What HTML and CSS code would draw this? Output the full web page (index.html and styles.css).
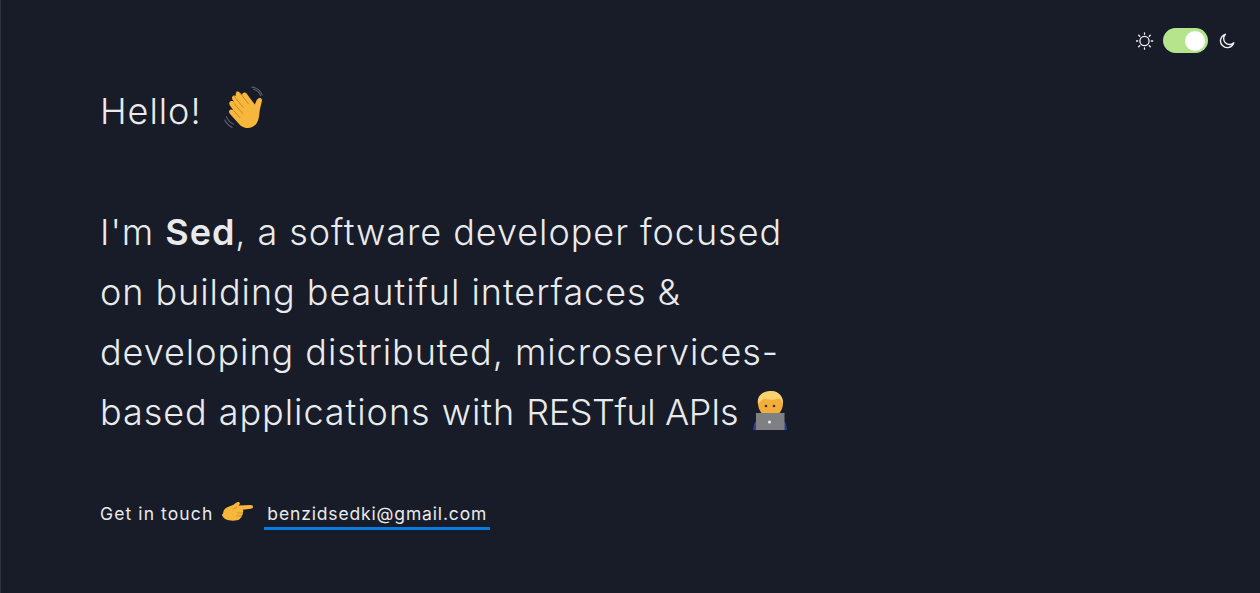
FILE: index.html
```html
<!DOCTYPE html>
<html lang="en">
<head>
    <meta charset="UTF-8">
    <meta name="viewport" content="width=device-width, initial-scale=1.0">
    <title>Sed</title>
    <link rel="stylesheet" href="styles.css">
</head>
<body>
    <div class="theme-switch">
        <svg class="theme-icon" width="18" height="18" viewBox="0 0 18 18" fill="none" stroke="#f2f2f2" stroke-width="1.3" stroke-linecap="round">
            <circle cx="8.500" cy="9" r="4.600"/>
            <path d="M8.500 .8v1.400M8.500 15.800v1.400M.3 9h1.400M15.300 9h1.400M2.700 3.200l1 1M13.300 13.800l1 1M2.700 14.800l1-1M13.300 4.200l1-1"/>
        </svg>
        <div class="toggle"><span class="knob"></span></div>
        <svg class="theme-icon moon" width="16" height="16" viewBox="0 0 16 16" fill="none" stroke="#f2f2f2" stroke-width="1.4" stroke-linejoin="round">
            <path d="M6.400 1.300a6.800 6.800 0 1 0 8.400 8.500 5.600 5.600 0 0 1-8.400-8.500z"/>
        </svg>
    </div>

    <main class="intro">
        <h1 class="hello">Hello!
            <svg class="emoji wave" width="50" height="50" viewBox="0 0 44 44">
                <g fill="none" stroke="#5a5d66" stroke-width="1" stroke-linecap="round">
                    <path d="M27 3c3 .6 5 2.600 6 5.500"/>
                    <path d="M25.500 1c4 .4 7.500 3.400 9 7"/>
                    <path d="M3 27c1 3 3 5 6 6.500"/>
                    <path d="M1.500 30c1.500 3 3.500 5 6.500 6.500"/>
                </g>
                <path fill="#f6b73c" d="M11 5.500c1-1.200 2.800-.8 3.800.4l2 2.300c-.2-1.500 1.500-3 3-2.200 1 .5 1.500 1.300 2.200 2.300l6 8 1.400-3.300c.6-1.500 1.800-3 3.600-2.400 1.600.6 1.400 2.300 1 3.800l-1.600 6.500c-.6 4.500-.4 8.200-2.900 12-3.400 5-10 5.300-14.400 1.600L6 24.500c-1-1.200-1-2.900.3-3.600 1.100-.6 2.300-.1 3.200.8l-3.300-4.400c-1-1.300-1-3 .4-3.800 1.200-.7 2.500-.2 3.400.9l-1.400-2c-1-1.300-1-3 .3-3.800 1-.6 1.900-.3 2.600.3-.7-1-.4-2 .5-3.400z"/>
                <path fill="none" stroke="#c9861f" stroke-width=".8" d="M14.800 5.900l7.700 10M9.600 8.700l8.400 10.500M9.500 15l8 9.500M9.500 21.700l5.500 6.300"/>
            </svg>
        </h1>

        <p class="bio">I'm <strong>Sed</strong>, a software developer focused<br>
            on building beautiful interfaces &amp;<br>
            developing distributed, microservices-<br>
            based applications with <span class="caps">RESTful APIs</span>
            <svg class="emoji dev" width="38" height="40" viewBox="0 0 38 40">
                <path fill="#2c3f9e" d="M2 39l1-6c.5-2 2-3 4-3h24c2 0 3.500 1 4 3l1 6z"/>
                <path fill="#f2ae3a" d="M7 12c0-7 5.500-11 12.500-11S32 5 32 12c0 8-5.500 14-12.500 14S7 20 7 12z"/>
                <path fill="#f7d270" d="M7 13C5.500 6 11 0 19 0c8-.5 13.500 5 13 13-.8-2.500-1.500-4-3.500-5.500-4 1.500-11.500 1.500-15.500 0C11 9 9 11 7 13z"/>
                <circle cx="15" cy="15" r="1.300" fill="#4a3215"/>
                <circle cx="23" cy="15" r="1.300" fill="#4a3215"/>
                <path fill="#7f8084" d="M5 22h28.500v17H5z"/>
                <circle cx="18.500" cy="31" r="1.500" fill="#ececec"/>
            </svg>
        </p>

        <p class="contact">
            <span class="touch">Get in touch</span>
            <svg class="emoji point" width="32" height="24" viewBox="0 0 32 24">
                <path fill="#f6b73c" d="M1 13c0-3.500 2-6 5-7 2.500-.8 5-1.800 7-3.500 1.500-1.200 3.500-2 4.500-1 .8.8.2 2-.8 3l12-.5c1.500 0 2.300.8 2.300 1.800s-.8 1.800-2.300 2l-8 1c.8 1 .7 2.200 0 3 .5 1.200 0 2.200-1 2.800.2 1-.3 2-1.300 2.400-.5 1.500-2 2-3.500 2.300-2.500.5-5.500.5-8 0-3.500-.7-6.900-2.800-6.900-6.300z"/>
                <path fill="none" stroke="#c9861f" stroke-width=".7" d="M15 6l-4 2M20 12h-5M19 15h-5"/>
            </svg>
            <a class="mail" href="mailto:benzidsedki@gmail.com">benzidsedki@gmail.com</a>
        </p>
    </main>
</body>
</html>
```

FILE: styles.css
```css
html, body {
    height: 100%;
}

body {
    margin: 0;
    background-color: #181c28;
    color: #e8eaec;
    font-family: Inter, Lato, sans-serif;
    border-left: 1px solid #2e323c;
    overflow: hidden;
}

.theme-switch {
    display: flex;
    justify-content: flex-end;
    align-items: center;
    gap: 9px;
    padding: 28px 25px 0 0;
    height: 25px;
}

.theme-icon {
    display: block;
}

.moon {
    margin-left: 2px;
}

.toggle {
    width: 45px;
    height: 25px;
    border-radius: 13px;
    background-color: #b5e48c;
    display: flex;
    align-items: center;
    justify-content: flex-end;
    padding-right: 3px;
    box-sizing: border-box;
}

.knob {
    width: 20px;
    height: 20px;
    border-radius: 50%;
    background-color: #fff;
}

.intro {
    padding: 28px 0 0 99px;
}

.hello, .bio {
    margin: 0;
    font-size: 36px;
    font-weight: 300;
    line-height: 60px;
    letter-spacing: 0.95px;
}

.hello {
    display: flex;
    align-items: center;
    gap: 21px;
    height: 60px;
}

.bio {
    margin-top: 61px;
    white-space: nowrap;
}

.bio strong {
    font-weight: 600;
}

.caps {
    letter-spacing: -0.4px;
}

.emoji {
    display: inline-block;
}

.dev {
    margin-left: 2px;
    vertical-align: -6px;
}

.contact {
    display: flex;
    align-items: center;
    margin: 56px 0 0;
    font-size: 17.5px;
    font-weight: 400;
    letter-spacing: 0.85px;
    height: 36px;
}

.touch {
    padding-bottom: 6px;
    letter-spacing: 1.1px;
}

.point {
    margin: -6px 10px 0 9px;
}

.mail {
    color: #e8eaec;
    text-decoration: none;
    padding: 0 3px 3px;
    border-bottom: 3px solid #0a7be0;
}
```
